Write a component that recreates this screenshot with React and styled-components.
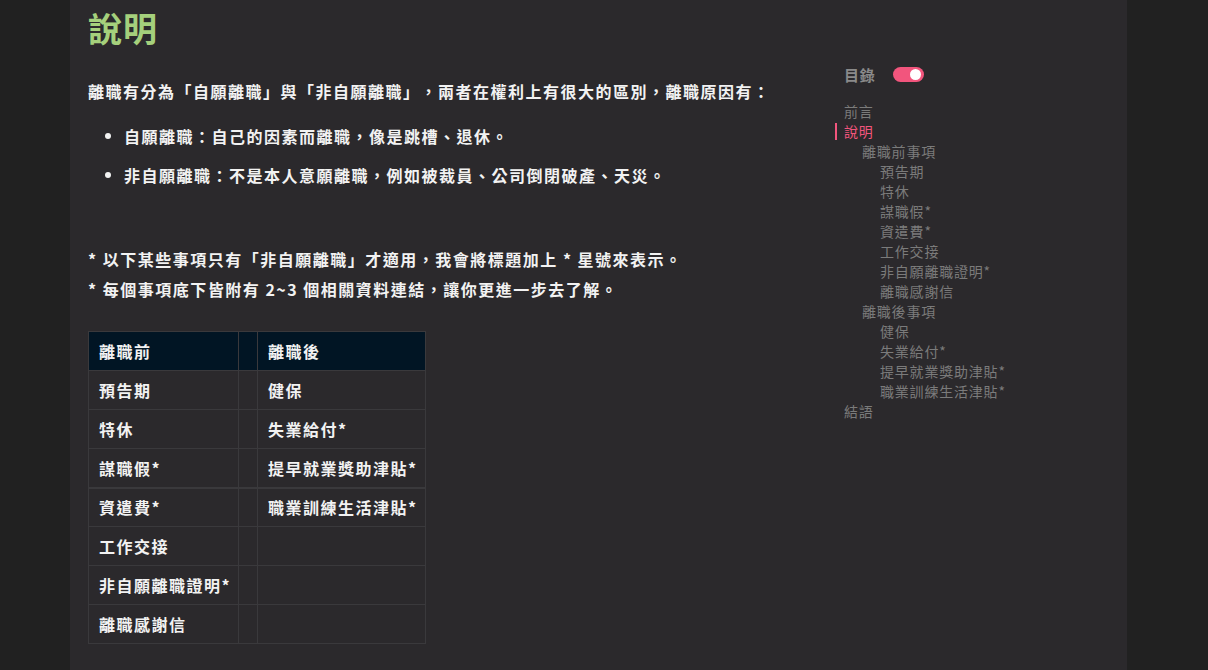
import React from "react";
import styled, { createGlobalStyle } from "styled-components";

const Global = createGlobalStyle`
  html, body { margin: 0; padding: 0; background: #212121; }
  body { font-family: "Noto Sans CJK TC", "Noto Sans", sans-serif; height: 670px; overflow: hidden; text-spacing-trim: space-all; }
  * { box-sizing: border-box; }
`;

const Page = styled.div`
  display: flex;
  height: 670px;
  padding-left: 70px;
`;

const Panel = styled.div`
  width: 1057px;
  height: 670px;
  background: #2b292c;
  display: flex;
  overflow: hidden;
`;

const Main = styled.main`
  width: 765px;
  padding-left: 18px;
  color: #f2f2f2;
  font-weight: 700;
  font-size: 16px;
  letter-spacing: 1.5px;
  text-spacing-trim: space-all;
`;

const Title = styled.h1`
  margin: 0;
  padding-top: 7px;
  font-size: 34px;
  line-height: 42px;
  color: #a5d07c;
  font-weight: 700;
  letter-spacing: 1px;
`;

const P = styled.p`
  margin: ${(p) => p.$mt || 0}px 0 0;
  line-height: 30px;
`;

const List = styled.ul`
  margin: 15px 0 0;
  padding-left: 36px;
  list-style: none;
`;

const Item = styled.li`
  position: relative;
  line-height: 30px;
  & + & { margin-top: 9px; }
  &::before {
    content: "";
    position: absolute;
    left: -19px;
    top: 12px;
    width: 6px;
    height: 6px;
    border-radius: 50%;
    background: #f2f2f2;
  }
`;

const Table = styled.table`
  margin-top: 27px;
  border-collapse: collapse;
  border: 1px solid #3a393c;
`;

const Th = styled.th`
  background: #011524;
  text-align: left;
  height: 39px;
  padding: 0 0 0 10px;
  border: 1px solid #3a393c;
  font-weight: 700;
  width: ${(p) => p.$w}px;
`;

const Tr = styled.tr`
  border-top: ${(p) => (p.$thick ? "2px" : "1px")} solid #3a393c;
`;

const Td = styled.td`
  height: 39px;
  padding: 0 0 0 10px;
  border-left: 1px solid #3a393c;
  border-right: 1px solid #3a393c;
`;

const TocCol = styled.nav`
  width: 220px;
  padding-top: 63px;
  font-size: 14px;
  letter-spacing: 0.8px;
`;

const TocHead = styled.div`
  display: flex;
  align-items: center;
  gap: 17px;
  padding-left: 9px;
  height: 22px;
  color: #8a8a8a;
  font-weight: 700;
  font-size: 15px;
`;

const Toggle = styled.span`
  position: relative;
  width: 31px;
  height: 15px;
  border-radius: 8px;
  background: #f2557d;
  &::after {
    content: "";
    position: absolute;
    right: 3px;
    top: 2px;
    width: 11px;
    height: 11px;
    border-radius: 50%;
    background: #fff;
  }
`;

const TocList = styled.ul`
  list-style: none;
  margin: 16px 0 0;
  padding: 0;
`;

const TocItem = styled.li`
  position: relative;
  line-height: 20px;
  height: 20px;
  padding-left: ${(p) => 9 + p.$lvl * 18}px;
  color: ${(p) => (p.$active ? "#f2557d" : "#7b7b7b")};
  ${(p) =>
    p.$active &&
    `&::before{content:"";position:absolute;left:0;top:2px;width:2px;height:17px;background:#f2557d;}`}
`;

const toc = [
  ["前言", 0],
  ["說明", 0, true],
  ["離職前事項", 1],
  ["預告期", 2],
  ["特休", 2],
  ["謀職假*", 2],
  ["資遣費*", 2],
  ["工作交接", 2],
  ["非自願離職證明*", 2],
  ["離職感謝信", 2],
  ["離職後事項", 1],
  ["健保", 2],
  ["失業給付*", 2],
  ["提早就業獎助津貼*", 2],
  ["職業訓練生活津貼*", 2],
  ["結語", 0],
];

const rows = [
  ["預告期", "健保"],
  ["特休", "失業給付*"],
  ["謀職假*", "提早就業獎助津貼*"],
  ["資遣費*", "職業訓練生活津貼*"],
  ["工作交接", ""],
  ["非自願離職證明*", ""],
  ["離職感謝信", ""],
];

export default function App() {
  return (
    <>
      <Global />
      <Page>
        <Panel>
          <Main>
            <Title>說明</Title>
            <P $mt={27}>離職有分為「自願離職」與「非自願離職」，兩者在權利上有很大的區別，離職原因有：</P>
            <List>
              <Item>自願離職：自己的因素而離職，像是跳槽、退休。</Item>
              <Item>非自願離職：不是本人意願離職，例如被裁員、公司倒閉破產、天災。</Item>
            </List>
            <P $mt={54}>* 以下某些事項只有「非自願離職」才適用，我會將標題加上 * 星號來表示。</P>
            <P>* 每個事項底下皆附有 2~3 個相關資料連結，讓你更進一步去了解。</P>
            <Table>
              <thead>
                <tr>
                  <Th $w={150}>離職前</Th>
                  <Th $w={19}></Th>
                  <Th $w={168}>離職後</Th>
                </tr>
              </thead>
              <tbody>
                {rows.map((r, i) => (
                  <Tr key={i} $thick={i === 3}>
                    <Td>{r[0]}</Td>
                    <Td></Td>
                    <Td>{r[1]}</Td>
                  </Tr>
                ))}
              </tbody>
            </Table>
          </Main>
          <TocCol>
            <TocHead>
              目錄
              <Toggle />
            </TocHead>
            <TocList>
              {toc.map(([t, l, a]) => (
                <TocItem key={t} $lvl={l} $active={a}>
                  {t}
                </TocItem>
              ))}
            </TocList>
          </TocCol>
        </Panel>
      </Page>
    </>
  );
}
